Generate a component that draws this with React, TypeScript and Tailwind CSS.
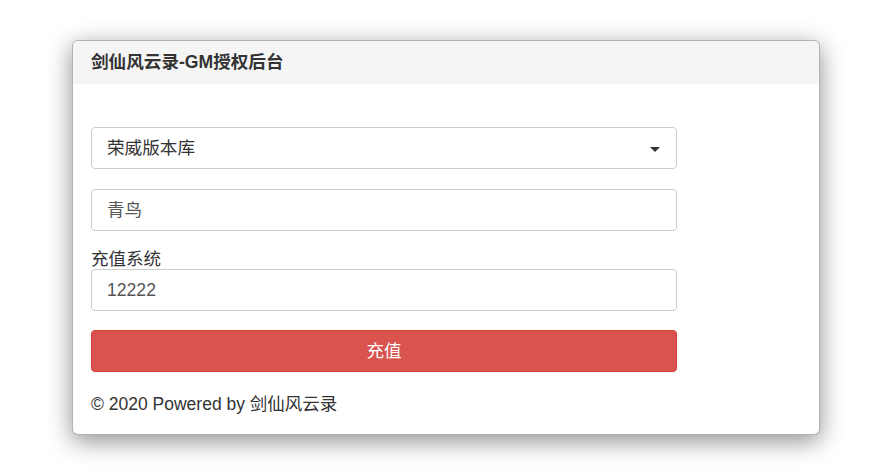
export default function App() {
  return (
    <div
      className="min-h-screen bg-white pt-[40px] pl-[72px]"
      style={{ fontFamily: '"Liberation Sans", "Noto Sans CJK SC", sans-serif' }}
    >
      <div className="w-[748px] rounded-[6px] border border-black/30 bg-white shadow-[0_6px_24px_rgba(0,0,0,0.45)] overflow-hidden">
        <div className="h-[43px] bg-[#f5f5f5] px-[18px] flex items-center">
          <h1 className="text-[17.6px] font-bold text-[#333]">剑仙风云录-GM授权后台</h1>
        </div>
        <div className="px-[18px] pt-[43px] pb-[19px] text-[#333]">
          <div className="w-[586px] flex flex-col">
            <div className="relative h-[42px] rounded-[4px] border border-[#ccc] flex items-center pl-[15px] text-[17.6px] text-[#333]">
              荣威版本库
              <span className="absolute right-[16px] top-[19px] w-0 h-0 border-l-[5px] border-r-[5px] border-t-[5px] border-l-transparent border-r-transparent border-t-[#333]" />
            </div>
            <div className="mt-[20px] h-[42px] rounded-[4px] border border-[#ccc] flex items-center pl-[15px] text-[17.6px] text-[#555]">
              青鸟
            </div>
            <label className="mt-[18px] text-[17.5px] leading-[20px] text-[#333]">充值系统</label>
            <div className="h-[42px] rounded-[4px] border border-[#ccc] flex items-center pl-[15px] text-[17.6px] text-[#555]">
              12222
            </div>
            <button className="mt-[19px] h-[42px] rounded-[4px] border border-[#d43f3a] bg-[#d9534f] text-white text-[17.6px]">
              充值
            </button>
            <p className="mt-[21px] text-[17.5px] leading-[22px] text-[#333]">© 2020 Powered by 剑仙风云录</p>
          </div>
        </div>
      </div>
    </div>
  );
}
